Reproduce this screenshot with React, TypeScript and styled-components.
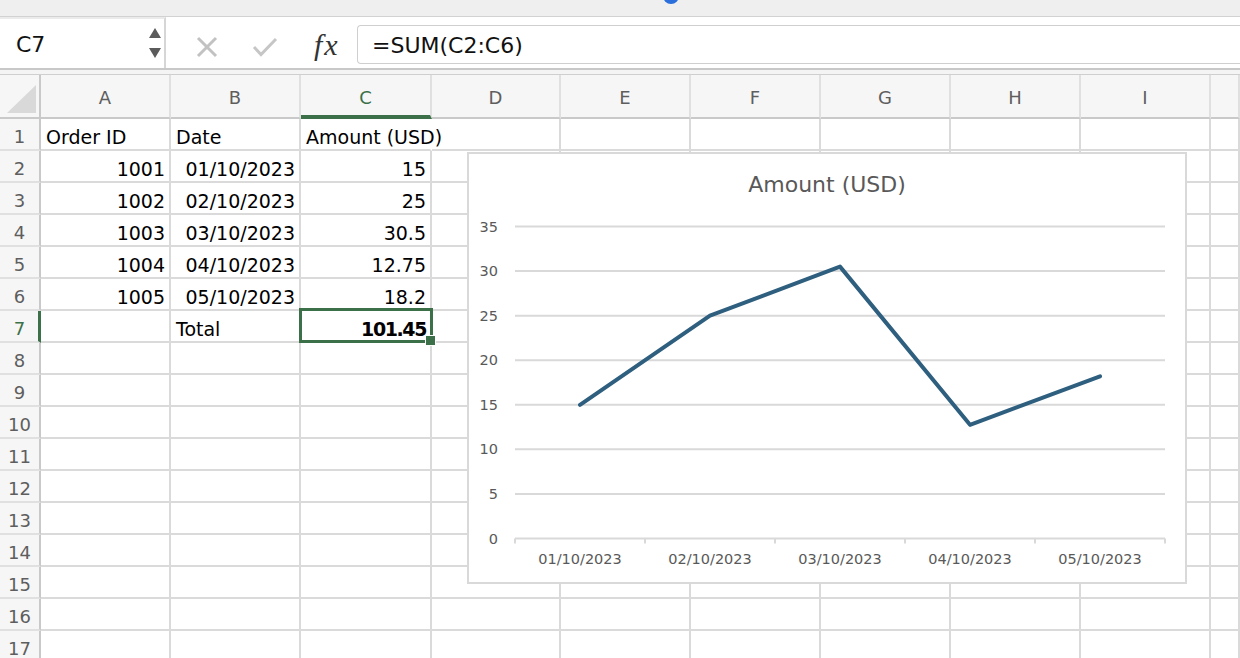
import React from 'react';
import styled, { createGlobalStyle, css } from 'styled-components';

const GlobalStyle = createGlobalStyle`
  html, body { margin: 0; padding: 0; background: #ffffff; overflow: hidden; }
  #root { width: 1240px; height: 658px; overflow: hidden; }
  *, *::before, *::after { box-sizing: border-box; }
`;

const GREEN = '#3b7049';
const GRID = '#dadada';
const HEAD_LINE = '#c9c9c9';
const SANS = `"DejaVu Sans", "Liberation Sans", sans-serif`;

const Page = styled.div`
  width: 1240px;
  height: 658px;
  overflow: hidden;
  display: flex;
  flex-direction: column;
  font-family: ${SANS};
  background: #fff;
`;

const TopStrip = styled.div`
  flex: none;
  height: 17px;
  background: #efefef;
  border-bottom: 1px solid #d2d2d2;
  display: flex;
  overflow: hidden;
`;

const StatusDot = styled.span`
  width: 16px;
  height: 16px;
  border-radius: 50%;
  background: #2a6fdb;
  margin-left: 663px;
  margin-top: -12px;
`;

const FormulaBar = styled.div`
  flex: none;
  height: 51px;
  display: flex;
  align-items: stretch;
  background: #fff;
`;

const NameBox = styled.div`
  width: 166px;
  flex: none;
  display: flex;
  align-items: center;
  justify-content: space-between;
  padding: 1px 3px 0 16px;
  border-top: 2px solid #ebebeb;
  border-right: 2px solid #d6d6d6;
  font-size: 22px;
  color: #111;
`;

const Spinner = styled.div`
  display: flex;
  flex-direction: column;
  align-items: center;
  gap: 10px;
  margin-top: -2px;
`;

const SpinArrow = styled.span<{ $dir: 'up' | 'down' }>`
  width: 0;
  height: 0;
  border-left: 6px solid transparent;
  border-right: 6px solid transparent;
  ${(p) =>
    p.$dir === 'up'
      ? css`border-bottom: 10px solid #5b5b5b;`
      : css`border-top: 10px solid #5b5b5b;`}
`;

const Actions = styled.div`
  display: flex;
  align-items: center;
  padding-top: 8px;
`;

const ActionSvg = styled.svg<{ $gap: number }>`
  flex: none;
  margin-left: ${(p) => p.$gap}px;
  display: block;
`;

const FxLabel = styled.span`
  display: inline-block;
  width: 27px;
  margin-left: 36px;
  font-family: "Liberation Serif", "DejaVu Serif", serif;
  font-style: italic;
  font-size: 30px;
  letter-spacing: 2px;
  color: #333;
  line-height: 1;
  margin-top: -4px;
`;

const FormulaInput = styled.div`
  flex: 1;
  margin: 8px 0 0 16px;
  height: 39px;
  border: 1px solid #cfcfcf;
  border-right: none;
  border-radius: 4px 0 0 4px;
  padding: 1px 0 0 14px;
  display: flex;
  align-items: center;
  font-size: 22px;
  color: #111;
`;

const Divider = styled.div`
  flex: none;
  height: 7px;
  background: #f4f4f4;
  border-top: 2px solid #c8c8c8;
  border-bottom: 1px solid #cfcfcf;
`;

const SheetArea = styled.div`
  position: relative;
  flex: 1;
  overflow: hidden;
`;

const Grid = styled.div`
  display: grid;
  grid-template-columns: 41px 130px 130px 131px 129px 130px 130px 130px 130px 130px 1fr;
  grid-template-rows: 44px repeat(17, 32px);
`;

const Corner = styled.div`
  background: #f6f6f6;
  border-right: 2px solid ${HEAD_LINE};
  border-bottom: 2px solid ${HEAD_LINE};
  display: flex;
  align-items: flex-end;
  justify-content: flex-end;
  padding: 0 3px 4px 0;
`;

const CornerTriangle = styled.span`
  width: 29px;
  height: 28px;
  background: #d9d9d9;
  clip-path: polygon(100% 0, 100% 100%, 0 100%);
`;

const ColHeader = styled.div<{ $active?: boolean }>`
  background: #f6f6f6;
  border-right: 2px solid #e0e0e0;
  border-bottom: 2px solid ${HEAD_LINE};
  display: flex;
  align-items: center;
  justify-content: center;
  padding-top: 2px;
  font-size: 18px;
  color: #5e5e5e;
  ${(p) =>
    p.$active &&
    css`
      color: ${GREEN};
      border-bottom: 4px solid ${GREEN};
      padding-top: 4px;
    `}
`;

const RowHeader = styled.div<{ $active?: boolean }>`
  background: #f6f6f6;
  border-right: 2px solid ${HEAD_LINE};
  border-bottom: 2px solid #e0e0e0;
  display: flex;
  align-items: center;
  justify-content: center;
  padding-top: 5px;
  font-size: 18px;
  color: #5e5e5e;
  ${(p) =>
    p.$active &&
    css`
      color: ${GREEN};
      border-right: 3px solid ${GREEN};
      padding-left: 1px;
    `}
`;

const Cell = styled.div<{ $align?: 'left' | 'right'; $bold?: boolean; $noRight?: boolean; $sel?: boolean }>`
  position: relative;
  z-index: ${(p) => (p.$sel ? 3 : 'auto')};
  border-right: 2px solid ${(p) => (p.$noRight ? 'transparent' : GRID)};
  border-bottom: 2px solid ${GRID};
  display: flex;
  align-items: center;
  justify-content: ${(p) => (p.$align === 'right' ? 'flex-end' : 'flex-start')};
  padding: 5px 4px 0 5px;
  font-size: 19px;
  color: #000;
  white-space: nowrap;
  overflow: visible;
  ${(p) =>
    p.$bold &&
    css`
      font-weight: 700;
      letter-spacing: -1.4px;
    `}
`;

const Selection = styled.span`
  position: absolute;
  top: -3px;
  left: -2px;
  right: -3px;
  bottom: -2px;
  border: 3px solid ${GREEN};
  pointer-events: none;
`;

const FillHandle = styled.span`
  position: absolute;
  right: -6px;
  bottom: -5px;
  width: 11px;
  height: 11px;
  background: ${GREEN};
  border: 1px solid #fff;
`;

const ChartFrame = styled.div`
  position: absolute;
  top: 77px;
  left: 467px;
  width: 720px;
  height: 432px;
  background: #fff;
  border: 2px solid #d9d9d9;
  z-index: 5;
`;

const ChartSvg = styled.svg`
  display: block;
  font-family: ${SANS};
`;

type CellDef = { v: string; align?: 'left' | 'right'; bold?: boolean; sel?: boolean; noRight?: boolean };

const COLS = ['A', 'B', 'C', 'D', 'E', 'F', 'G', 'H', 'I', ''];

const DATA: Record<number, Record<number, CellDef>> = {
  1: {
    0: { v: 'Order ID' },
    1: { v: 'Date' },
    2: { v: 'Amount (USD)', noRight: true },
  },
  2: { 0: { v: '1001', align: 'right' }, 1: { v: '01/10/2023', align: 'right' }, 2: { v: '15', align: 'right' } },
  3: { 0: { v: '1002', align: 'right' }, 1: { v: '02/10/2023', align: 'right' }, 2: { v: '25', align: 'right' } },
  4: { 0: { v: '1003', align: 'right' }, 1: { v: '03/10/2023', align: 'right' }, 2: { v: '30.5', align: 'right' } },
  5: { 0: { v: '1004', align: 'right' }, 1: { v: '04/10/2023', align: 'right' }, 2: { v: '12.75', align: 'right' } },
  6: { 0: { v: '1005', align: 'right' }, 1: { v: '05/10/2023', align: 'right' }, 2: { v: '18.2', align: 'right' } },
  7: { 1: { v: 'Total' }, 2: { v: '101.45', align: 'right', bold: true, sel: true } },
};

const SERIES = [
  { label: '01/10/2023', value: 15 },
  { label: '02/10/2023', value: 25 },
  { label: '03/10/2023', value: 30.5 },
  { label: '04/10/2023', value: 12.75 },
  { label: '05/10/2023', value: 18.2 },
];

const PLOT_LEFT = 46;
const PLOT_RIGHT = 696;
const BASE_Y = 384.5;
const UNIT = 8.914;
const CAT_W = (PLOT_RIGHT - PLOT_LEFT) / SERIES.length;
const yOf = (v: number) => BASE_Y - v * UNIT;

const LineChart: React.FC = () => {
  const ticks = [0, 5, 10, 15, 20, 25, 30, 35];
  const pts = SERIES.map((s, i) => `${PLOT_LEFT + CAT_W * (i + 0.5)},${yOf(s.value).toFixed(2)}`).join(' ');
  return (
    <ChartSvg width={716} height={428} viewBox="0 0 716 428">
      <text x={358} y={38} textAnchor="middle" fontSize={22} fill="#595959">
        Amount (USD)
      </text>
      {ticks.map((t) => (
        <g key={t}>
          <line x1={PLOT_LEFT} x2={PLOT_RIGHT} y1={yOf(t)} y2={yOf(t)} stroke="#d9d9d9" strokeWidth={2} />
          <text x={29} y={yOf(t) + 5} textAnchor="end" fontSize={14.5} fill="#595959">
            {t}
          </text>
        </g>
      ))}
      {Array.from({ length: SERIES.length + 1 }).map((_, i) => (
        <line
          key={i}
          x1={PLOT_LEFT + CAT_W * i}
          x2={PLOT_LEFT + CAT_W * i}
          y1={BASE_Y}
          y2={BASE_Y + 5}
          stroke="#d9d9d9"
          strokeWidth={2}
        />
      ))}
      {SERIES.map((s, i) => (
        <text key={s.label} x={PLOT_LEFT + CAT_W * (i + 0.5)} y={410} textAnchor="middle" fontSize={14.5} fill="#595959">
          {s.label}
        </text>
      ))}
      <polyline points={pts} fill="none" stroke="#2f5f7f" strokeWidth={4} strokeLinejoin="round" strokeLinecap="round" />
    </ChartSvg>
  );
};

export default function App() {
  const rows = Array.from({ length: 17 }, (_, i) => i + 1);
  return (
    <>
      <GlobalStyle />
      <Page>
        <TopStrip>
          <StatusDot />
        </TopStrip>
        <FormulaBar>
          <NameBox>
            <span>C7</span>
            <Spinner>
              <SpinArrow $dir="up" />
              <SpinArrow $dir="down" />
            </Spinner>
          </NameBox>
          <Actions>
            <ActionSvg $gap={30} width={22} height={22} viewBox="0 0 22 22">
              <path d="M2 2 L20 20 M20 2 L2 20" stroke="#c2c2c2" strokeWidth={3} fill="none" />
            </ActionSvg>
            <ActionSvg $gap={34} width={26} height={20} viewBox="0 0 26 20">
              <path d="M2 10 L9 17.5 L24 2" stroke="#c6c6c6" strokeWidth={3} fill="none" />
            </ActionSvg>
            <FxLabel>fx</FxLabel>
          </Actions>
          <FormulaInput>=SUM(C2:C6)</FormulaInput>
        </FormulaBar>
        <Divider />
        <SheetArea>
          <Grid>
            <Corner>
              <CornerTriangle />
            </Corner>
            {COLS.map((c, i) => (
              <ColHeader key={`h${i}`} $active={c === 'C'}>
                {c}
              </ColHeader>
            ))}
            {rows.map((r) => (
              <React.Fragment key={r}>
                <RowHeader $active={r === 7}>{r}</RowHeader>
                {COLS.map((_, ci) => {
                  const d = DATA[r]?.[ci];
                  return (
                    <Cell key={ci} $align={d?.align} $bold={d?.bold} $noRight={d?.noRight} $sel={d?.sel}>
                      {d?.v}
                      {d?.sel && (
                        <>
                          <Selection />
                          <FillHandle />
                        </>
                      )}
                    </Cell>
                  );
                })}
              </React.Fragment>
            ))}
          </Grid>
          <ChartFrame>
            <LineChart />
          </ChartFrame>
        </SheetArea>
      </Page>
    </>
  );
}
